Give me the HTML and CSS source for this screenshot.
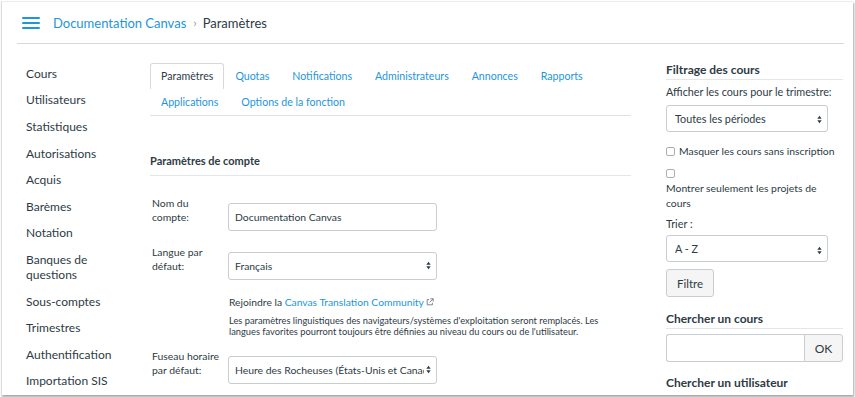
FILE: index.html
```html
<html>
<head>
    <meta charset="utf-8" />
    <title>Paramètres</title>
    <link rel="stylesheet" href="styles.css">
</head>
<body>
    <div class="window">
        <header class="topbar">
            <span class="burger"><i></i><i></i><i></i></span>
            <a class="crumb" href="#">Documentation Canvas</a>
            <span class="sep">&#8250;</span>
            <span class="current">Paramètres</span>
        </header>
        <div class="layout">
            <nav class="sidenav">
                <a href="#">Cours</a>
                <a href="#">Utilisateurs</a>
                <a href="#">Statistiques</a>
                <a href="#">Autorisations</a>
                <a href="#">Acquis</a>
                <a href="#">Barèmes</a>
                <a href="#">Notation</a>
                <a href="#">Banques de<br>questions</a>
                <a href="#">Sous-comptes</a>
                <a href="#">Trimestres</a>
                <a href="#">Authentification</a>
                <a href="#">Importation SIS</a>
            </nav>
            <main class="content">
                <ul class="tabs">
                    <li class="active">Paramètres</li>
                    <li>Quotas</li>
                    <li>Notifications</li>
                    <li>Administrateurs</li>
                    <li>Annonces</li>
                    <li>Rapports</li>
                    <li>Applications</li>
                    <li>Options de la fonction</li>
                </ul>
                <h2 class="section-title">Paramètres de compte</h2>
                <div class="row">
                    <label>Nom du<br>compte:</label>
                    <input class="field" type="text" value="Documentation Canvas" />
                </div>
                <div class="row">
                    <label>Langue par<br>défaut:</label>
                    <div class="select-wrap">
                        <select class="field"><option>Français</option></select>
                        <svg class="arrows" viewBox="0 0 6 10"><path d="M3 0.5 L5.6 4 H0.4 Z M3 9.5 L0.4 6 H5.6 Z" /></svg>
                    </div>
                </div>
                <p class="join">Rejoindre la <a href="#">Canvas Translation Community</a>
                    <svg class="ext" viewBox="0 0 10 10"><path d="M4 2 H1.5 V8.5 H8 V6 M5.5 1 H9 V4.5 M9 1 L4.5 5.5" /></svg>
                </p>
                <p class="hint">Les paramètres linguistiques des navigateurs/systèmes d'exploitation seront remplacés. Les langues favorites pourront toujours être définies au niveau du cours ou de l'utilisateur.</p>
                <div class="row">
                    <label>Fuseau horaire<br>par défaut:</label>
                    <div class="select-wrap">
                        <select class="field"><option>Heure des Rocheuses (États-Unis et Canada)</option></select>
                        <svg class="arrows" viewBox="0 0 6 10"><path d="M3 0.5 L5.6 4 H0.4 Z M3 9.5 L0.4 6 H5.6 Z" /></svg>
                    </div>
                </div>
            </main>
            <aside class="sidebar">
                <h3>Filtrage des cours</h3>
                <p class="side-label">Afficher les cours pour le trimestre:</p>
                <div class="select-wrap">
                    <select class="field"><option>Toutes les périodes</option></select>
                    <svg class="arrows" viewBox="0 0 6 10"><path d="M3 0.5 L5.6 4 H0.4 Z M3 9.5 L0.4 6 H5.6 Z" /></svg>
                </div>
                <label class="check"><input type="checkbox" /> Masquer les cours sans inscription</label>
                <label class="check stacked"><input type="checkbox" /><span>Montrer seulement les projets de cours</span></label>
                <p class="side-label sort-label">Trier :</p>
                <div class="select-wrap sort">
                    <select class="field"><option>A - Z</option></select>
                    <svg class="arrows" viewBox="0 0 6 10"><path d="M3 0.5 L5.6 4 H0.4 Z M3 9.5 L0.4 6 H5.6 Z" /></svg>
                </div>
                <button class="btn">Filtre</button>
                <h3>Chercher un cours</h3>
                <div class="search">
                    <input type="text" />
                    <button>OK</button>
                </div>
                <h3>Chercher un utilisateur</h3>
            </aside>
        </div>
    </div>
</body>
</html>
```

FILE: styles.css
```css
html, body {
    margin: 0;
    background: #fff;
    overflow: hidden;
}
body {
    font-family: Lato, "Open Sans", sans-serif;
    color: #2d3b45;
}
a {
    color: #1d95e0;
    text-decoration: none;
}
.window {
    box-sizing: border-box;
    margin: 1px 0 0 1px;
    width: 852px;
    height: 394px;
    border-left: 1px solid #dcdcdc;
    border-top: 1px solid #ececec;
    box-shadow: 1px 2px 2px rgba(0, 0, 0, 0.35);
    overflow: hidden;
}

/* top bar */
.topbar {
    display: flex;
    align-items: center;
    height: 41px;
    margin: 0 9px 0 15px;
    padding-left: 5px;
    border-bottom: 1px solid #d5d9dc;
}
.burger {
    display: flex;
    flex-direction: column;
    justify-content: space-between;
    width: 18px;
    height: 12px;
    margin-right: 13px;
}
.burger i {
    display: block;
    height: 2px;
    background: #1d95e0;
    border-radius: 1px;
}
.crumb {
    font-size: 13px;
}
.sep {
    margin: 0 6px 0 7px;
    color: #8b969e;
    font-size: 12px;
}
.current {
    font-size: 13px;
}

/* columns */
.layout {
    display: flex;
}
.sidenav {
    width: 124px;
    padding: 16px 0 0 24px;
    display: flex;
    flex-direction: column;
}
.sidenav a {
    color: #2d3b45;
    font-size: 12px;
    line-height: 15px;
    padding: 5.8px 0;
}
.content {
    width: 481px;
}
.sidebar {
    width: 177px;
    margin-left: 35px;
}

/* tabs */
.tabs {
    display: flex;
    flex-wrap: wrap;
    list-style: none;
    margin: 19px 0 0;
    padding: 0;
    border-bottom: 1px solid #dfe2e4;
}
.tabs li {
    box-sizing: border-box;
    height: 26px;
    line-height: 26px;
    padding: 0 12px 0 11px;
    font-size: 10.6px;
    color: #1d95e0;
}
.tabs li.active {
    color: #2d3b45;
    border: 1px solid #d5d9dc;
    border-bottom: none;
    border-radius: 3px 3px 0 0;
    padding: 0 10px;
    line-height: 24px;
}

/* form */
.section-title {
    margin: 37px 0 0;
    padding-bottom: 6px;
    font-size: 11px;
    line-height: 16px;
    border-bottom: 1px solid #e4e7e9;
}
.row {
    display: flex;
    align-items: flex-start;
    margin-top: 21px;
}
.row + .row {
    margin-top: 15px;
}
.row label {
    width: 76px;
    padding-left: 2px;
    font-size: 10.4px;
    line-height: 13.5px;
}
.field {
    box-sizing: border-box;
    height: 28px;
    width: 209px;
    margin-top: 6px;
    padding: 0 6px;
    border: 1px solid #c7cdd1;
    border-radius: 3px;
    background: #fff;
    color: #2d3b45;
    font-family: Lato, sans-serif;
    font-size: 10.4px;
    outline: none;
}
select.field {
    appearance: none;
    -webkit-appearance: none;
    padding-right: 9px;
}
.select-wrap {
    position: relative;
}
.arrows {
    position: absolute;
    right: 3px;
    top: 50%;
    width: 5px;
    height: 9px;
    padding: 0 3px 0 2px;
    background: #fff;
    fill: #2d3b45;
}
.row .arrows {
    margin-top: -2px;
}
.join {
    margin: 15px 0 0 79px;
    font-size: 10.3px;
    line-height: 14px;
}
.ext {
    width: 8px;
    height: 8px;
    fill: none;
    stroke: #6b7780;
    stroke-width: 1.1;
}
.hint {
    margin: 6px 0 0 79px;
    width: 380px;
    font-size: 9.3px;
    line-height: 11px;
}
.join + .hint + .row {
    margin-top: 13px;
}

/* sidebar */
.sidebar h3 {
    margin: 18px 0 0;
    font-size: 12px;
    line-height: 16px;
    padding-bottom: 1px;
    border-bottom: 1px solid #e4e7e9;
}
.side-label {
    margin: 5px 0 0;
    font-size: 10.8px;
    line-height: 14px;
}
.sidebar .select-wrap {
    width: 162px;
}
.sidebar .field {
    width: 162px;
    height: 27px;
    margin-top: 6px;
    padding-left: 8px;
    font-size: 10.8px;
}
.sidebar .sort .field {
    margin-top: 4px;
}
.sidebar .arrows {
    margin-top: -1px;
}
.check {
    display: flex;
    align-items: center;
    margin-top: 12px;
    font-size: 10.4px;
    line-height: 14px;
}
.check input {
    appearance: none;
    -webkit-appearance: none;
    box-sizing: border-box;
    width: 9px;
    height: 9px;
    margin: 0 4px 0 0;
    border: 1px solid #a9b0b5;
    border-radius: 2px;
}
.check.stacked {
    display: block;
    margin-top: 11px;
    line-height: 15px;
}
.check.stacked span {
    display: block;
    margin-top: 3px;
}
.sort-label {
    margin-top: 6px;
}
.btn {
    display: block;
    margin-top: 7px;
    width: 48px;
    height: 28px;
    border: 1px solid #c7cdd1;
    border-radius: 3px;
    background: #f5f5f5;
    color: #2d3b45;
    font-family: Lato, sans-serif;
    font-size: 11.5px;
}
.sidebar .btn + h3 {
    margin-top: 14px;
}
.search {
    display: flex;
    margin-top: 5px;
    height: 28px;
}
.search input {
    box-sizing: border-box;
    flex: 1;
    min-width: 0;
    border: 1px solid #c7cdd1;
    border-right: none;
    border-radius: 3px 0 0 3px;
    outline: none;
}
.search button {
    width: 39px;
    border: 1px solid #c7cdd1;
    border-radius: 0 3px 3px 0;
    background: #f5f5f5;
    color: #2d3b45;
    font-family: Lato, sans-serif;
    font-size: 12px;
}
.search + h3 {
    margin-top: 13px;
    border-bottom: none;
}
```
